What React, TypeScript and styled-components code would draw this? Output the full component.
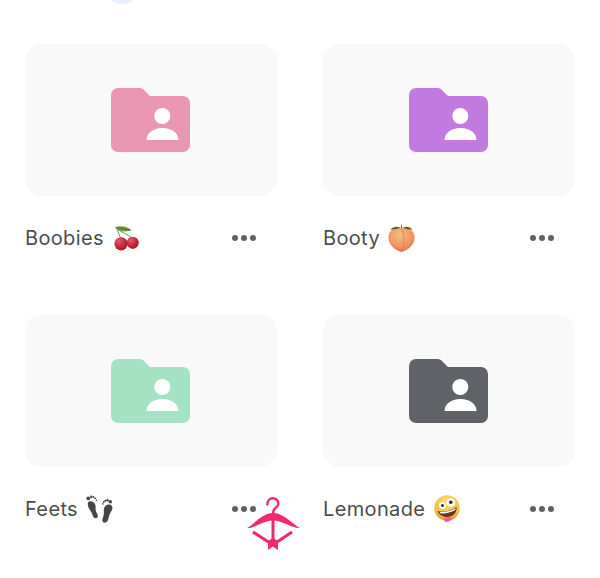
import React from "react";
import styled, { createGlobalStyle } from "styled-components";

const Global = createGlobalStyle`
  html, body { margin: 0; padding: 0; background: #fff; }
  body { font-family: Inter, "Noto Sans", "Liberation Sans", sans-serif; }
`;

const Page = styled.div`
  position: relative;
  width: 600px;
  height: 578px;
  overflow: hidden;
  background: #fff;
`;

const AvatarStrip = styled.div`
  height: 4px;
  overflow: hidden;
  padding-left: 104px;
`;

const AvatarCircle = styled.div`
  width: 36px;
  height: 36px;
  margin-top: -32px;
  border-radius: 50%;
  background: #e8eefb;
`;

const Grid = styled.div`
  display: grid;
  grid-template-columns: 252px 252px;
  column-gap: 46px;
  row-gap: 63px;
  padding: 40px 25px 0;
`;

const Item = styled.div`
  display: flex;
  flex-direction: column;
`;

const Thumb = styled.div`
  height: 152px;
  border-radius: 16px;
  background: #f9f9f9;
  display: flex;
  align-items: center;
  justify-content: center;
`;

const Meta = styled.div`
  margin-top: 28px;
  height: 28px;
  display: flex;
  align-items: center;
  justify-content: space-between;
  padding-right: 21px;
`;

const Name = styled.div<{ $gap: number }>`
  display: flex;
  align-items: center;
  gap: ${(p) => p.$gap}px;
  font-size: 20px;
  line-height: 28px;
  color: #4b4d50;
  letter-spacing: 0.35px;
`;

const More = styled.div`
  display: flex;
  gap: 3px;
`;

const Dot = styled.span`
  width: 6px;
  height: 6px;
  border-radius: 50%;
  background: #5f6166;
`;

const Logo = styled.svg`
  position: absolute;
  left: 247px;
  top: 497px;
  width: 53px;
  height: 54px;
`;

const FolderIcon = ({ color }: { color: string }) => (
  <svg width="80" height="64" viewBox="0 0 80 64">
    <path
      fill={color}
      d="M7 0H29Q31 0 32.5 1.5L39 8H72A7 7 0 0 1 79 15V57A7 7 0 0 1 72 64H7A7 7 0 0 1 0 57V7A7 7 0 0 1 7 0Z"
    />
    <circle cx="51.3" cy="28" r="8" fill="#fff" />
    <path fill="#fff" d="M35.5 52C35.5 45 42 40 51.5 40C61 40 67.5 45 67.5 52Z" />
  </svg>
);

const Cherry = () => (
  <svg width="25" height="25" viewBox="0 0 26 26">
    <defs>
      <radialGradient id="cherryFill" cx="0.35" cy="0.3" r="0.8">
        <stop offset="0" stopColor="#e8566a" />
        <stop offset="0.55" stopColor="#c4283c" />
        <stop offset="1" stopColor="#96162a" />
      </radialGradient>
    </defs>
    <path d="M1 1.500C6 -0.500 14 0 18 4.500C13 6.500 5 6 1 1.500Z" fill="#6f9a3a" />
    <path d="M2 1.800C7 2.500 13 3.500 17.500 4.500" stroke="#3d5f20" strokeWidth="0.7" fill="none" />
    <path d="M3 3C4.500 7 6 10 7 13M4 3.500C8 6.500 14 9 18.500 12" stroke="#7d8a45" strokeWidth="1" fill="none" />
    <circle cx="19.500" cy="17.500" r="6.300" fill="url(#cherryFill)" />
    <circle cx="7.300" cy="18.500" r="6.900" fill="url(#cherryFill)" />
  </svg>
);

const Peach = () => (
  <svg width="27" height="28" viewBox="0 0 27 28">
    <defs>
      <radialGradient id="peachFill" cx="0.45" cy="0.3" r="0.8">
        <stop offset="0" stopColor="#f7bd82" />
        <stop offset="0.6" stopColor="#ee9460" />
        <stop offset="1" stopColor="#d8603e" />
      </radialGradient>
    </defs>
    <path d="M13.500 28C6 26 0 20 0.500 12.500C1 6 7 3 13.500 4C20 3 26 6 26.500 12.500C27 20 21 26 13.500 28Z" fill="url(#peachFill)" />
    <path d="M13.500 4.500C16.500 11 16.800 20 14 27.500" stroke="#dc7a52" strokeWidth="0.7" fill="none" />
    <path d="M2.500 5.500C5 2.500 9 2 12.500 3.700C9 5 5.500 5.500 2.500 5.500ZM15 3.700C18 2 21.500 2.500 24.500 5.500C21 5.500 18 5 15 3.700Z" fill="#4f6b1e" />
    <path d="M13.500 4V0.800" stroke="#7a6a3a" strokeWidth="1" />
  </svg>
);

const Feet = () => (
  <svg width="28" height="28" viewBox="0 0 28 28" fill="#454545">
    <path d="M4 6.500C7 5.800 10 7.500 10.500 10.500C10.800 12.500 10.300 14.500 11 16.500C12 18.500 13.500 20.500 12.500 22.300C11.300 24 8.800 23.300 8 21.300C7.300 18.500 6 16.500 4.300 14C3 11.800 1.800 8 4 6.500Z" />
    <circle cx="3.300" cy="3.300" r="1.900" /><circle cx="6.300" cy="1.700" r="1.200" /><circle cx="8.500" cy="2" r="1" /><circle cx="10.300" cy="3.300" r="0.900" /><circle cx="11.500" cy="5.200" r="0.800" />
    <path d="M23 9.500C26 9 28 11 27.300 14C26.500 16.500 24.800 18.500 24 21C23.500 23.500 23 27 20.200 27.600C18 28 16.800 25.800 17.500 23.800C18.500 21 19.200 18.800 18.800 16C18.500 13 20 10 23 9.500Z" />
    <circle cx="25.300" cy="6.800" r="1.800" /><circle cx="22.500" cy="5.300" r="1.200" /><circle cx="20.400" cy="5.700" r="1" /><circle cx="18.800" cy="7" r="0.900" /><circle cx="17.800" cy="8.900" r="0.800" />
  </svg>
);

const Zany = () => (
  <svg width="26" height="28" viewBox="0 0 26 28">
    <defs>
      <radialGradient id="zanyFill" cx="0.5" cy="0.3" r="0.75">
        <stop offset="0" stopColor="#fbe27a" />
        <stop offset="0.7" stopColor="#f0bc48" />
        <stop offset="1" stopColor="#d98a28" />
      </radialGradient>
    </defs>
    <circle cx="13" cy="13" r="12.700" fill="url(#zanyFill)" />
    <circle cx="8.500" cy="10.500" r="3.300" fill="#fff" />
    <circle cx="8.500" cy="10.500" r="1.500" fill="#3a2a1a" />
    <circle cx="16.800" cy="7.500" r="4.300" fill="#fff" />
    <circle cx="16.800" cy="7.300" r="1.800" fill="#3a2a1a" />
    <path d="M3.500 16C9 17.500 16 16.500 22.500 12C23 18 19 22 13 22C8.500 22 5 19.500 3.500 16Z" fill="#6e3415" />
    <path d="M5.500 16.800C10 17.700 16 16.500 21.500 13.300L21.400 15.100C16 18 10 19.200 6.300 18.300Z" fill="#fff" />
    <path d="M10 23C13 22 17 22 18.500 23.500C17 26 13 27.500 11 26.800C10 26 10 24.500 10 23Z" fill="#e5609a" />
  </svg>
);

const items = [
  { name: "Boobies", color: "#e996b2", gap: 10, emoji: <Cherry /> },
  { name: "Booty", color: "#c279e0", gap: 8, emoji: <Peach /> },
  { name: "Feets", color: "#a5e2c4", gap: 7, emoji: <Feet /> },
  { name: "Lemonade", color: "#5f6367", gap: 9, emoji: <Zany /> },
];

export default function App() {
  return (
    <Page>
      <Global />
      <AvatarStrip>
        <AvatarCircle />
      </AvatarStrip>
      <Grid>
        {items.map((item) => (
          <Item key={item.name}>
            <Thumb>
              <FolderIcon color={item.color} />
            </Thumb>
            <Meta>
              <Name $gap={item.gap}>
                {item.name}
                {item.emoji}
              </Name>
              <More>
                <Dot />
                <Dot />
                <Dot />
              </More>
            </Meta>
          </Item>
        ))}
      </Grid>
      <Logo viewBox="0 0 53 54">
        <path d="M20.300 7.500C20.500 3.500 23 1.300 25.800 1.300C29 1.300 31.500 3.800 31.300 7C31.100 10.500 26.300 11.500 26.300 14.500L25.800 20" fill="none" stroke="#ef2b6c" strokeWidth="2.500" strokeLinecap="round" />
        <path d="M0 31C8 27 14 16.500 26 16C38 16.500 45 27 53 31C45 31.500 36 23.500 26 23.500C16 23.500 8 31.500 0 31Z" fill="#ef2b6c" />
        <path d="M26 23V46M6 35L21.500 45M45 35L30 45" stroke="#ef2b6c" strokeWidth="3" fill="none" />
        <path d="M21 44L26 41L31 44V53L26 49.500L21 53Z" fill="#ef2b6c" />
      </Logo>
    </Page>
  );
}
